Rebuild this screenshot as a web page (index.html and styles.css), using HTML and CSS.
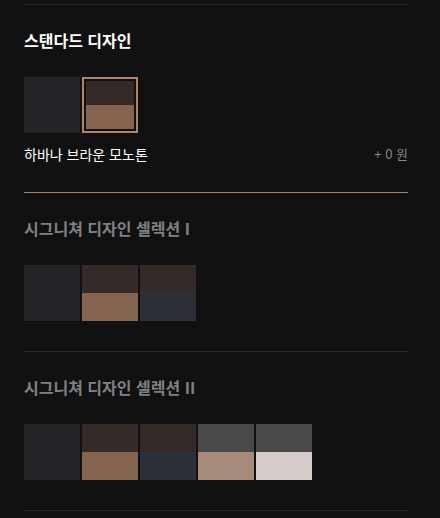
FILE: index.html
```html
<!DOCTYPE html>
<html lang="ko">
<head>
    <meta charset="UTF-8">
    <meta name="viewport" content="width=device-width, initial-scale=1.0">
    <title>디자인 선택</title>
    <link rel="stylesheet" href="styles.css">
</head>
<body>
    <div class="designs">
        <div class="design-prev"></div>

        <!-- 스탠다드 -->
        <div class="design active">
            <h2>스탠다드 디자인</h2>
            <div class="swatches">
                <div class="swatch"><span class="c-dark"></span><span class="c-dark"></span></div>
                <div class="swatch selected"><span class="c-cocoa"></span><span class="c-brown"></span></div>
            </div>
            <div class="design-info">
                <span class="design-name">하바나 브라운 모노톤</span>
                <span class="design-price">+ 0 원</span>
            </div>
        </div>

        <!-- 시그니쳐 I -->
        <div class="design">
            <h2>시그니쳐 디자인 셀렉션 I</h2>
            <div class="swatches">
                <div class="swatch"><span class="c-dark"></span><span class="c-dark"></span></div>
                <div class="swatch"><span class="c-cocoa"></span><span class="c-brown"></span></div>
                <div class="swatch"><span class="c-cocoa"></span><span class="c-slate"></span></div>
            </div>
        </div>

        <!-- 시그니쳐 II -->
        <div class="design">
            <h2>시그니쳐 디자인 셀렉션 II</h2>
            <div class="swatches">
                <div class="swatch"><span class="c-dark"></span><span class="c-dark"></span></div>
                <div class="swatch"><span class="c-cocoa"></span><span class="c-brown"></span></div>
                <div class="swatch"><span class="c-cocoa"></span><span class="c-slate"></span></div>
                <div class="swatch"><span class="c-gray"></span><span class="c-tan"></span></div>
                <div class="swatch"><span class="c-gray"></span><span class="c-ivory"></span></div>
            </div>
        </div>
    </div>
</body>
</html>
```

FILE: styles.css
```css
/* Основные стили */
body {
    font-family: "Noto Sans CJK KR", "Noto Sans", sans-serif;
    background: #111111;
    color: #ffffff;
    margin: 0;
    padding: 0;
}

.designs {
    padding: 0 32px 0 24px;
}

.design-prev {
    height: 4px;
    border-bottom: 1px solid #262626;
}

.design {
    padding: 24px 0 30px;
    border-bottom: 1px solid #262626;
}

.design.active {
    border-bottom-color: #a97d62;
}

.design h2 {
    margin: 0 0 26px;
    font-size: 16px;
    line-height: 22px;
    font-weight: 700;
    color: #7f8186;
}

.design.active h2 {
    color: #ffffff;
}

.swatches {
    display: flex;
    gap: 2px;
}

.swatch {
    width: 56px;
    height: 56px;
    display: flex;
    flex-direction: column;
    box-sizing: border-box;
}

.swatch span {
    flex: 1;
}

.swatch.selected {
    border: 2px solid #b08466;
    padding: 2px;
}

.design-info {
    display: flex;
    justify-content: space-between;
    align-items: center;
    margin-top: 13px;
    line-height: 16px;
}

.design-name {
    font-size: 14px;
    color: #ffffff;
}

.design-price {
    font-size: 13px;
    color: #85878c;
}

/* Цвета */
.c-dark { background: #222327; }
.c-cocoa { background: #342a28; }
.c-brown { background: #84634f; }
.c-slate { background: #2c3038; }
.c-gray { background: #494949; }
.c-tan { background: #a68b7b; }
.c-ivory { background: #d6cdca; }
```
